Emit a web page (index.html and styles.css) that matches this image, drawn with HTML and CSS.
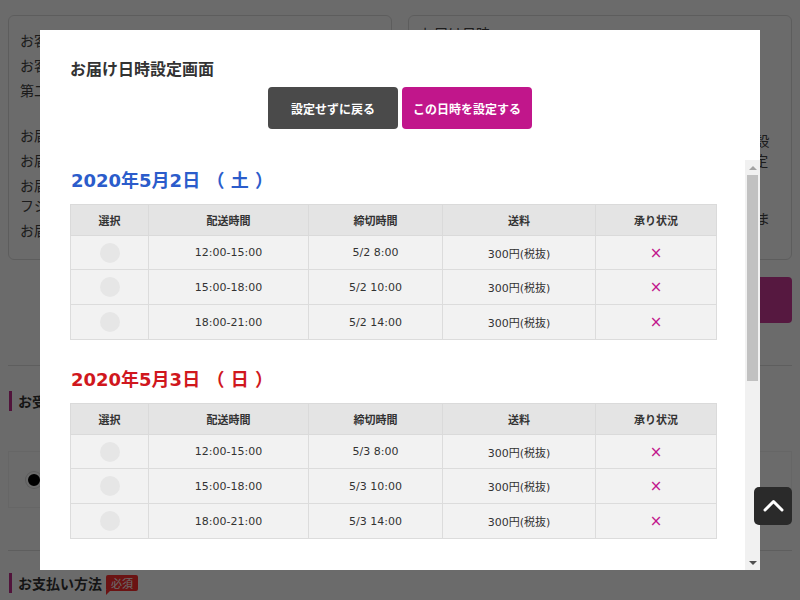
FILE: index.html
```html
<!DOCTYPE html>
<html lang="ja">
<head>
<meta charset="utf-8">
<title>お届け日時設定画面</title>
<link rel="stylesheet" href="styles.css">
</head>
<body>
<div class="page">
  <div class="cards">
    <section class="card card-info">
      <p class="row"><span class="lbl">お客さま名</span><span class="sep">:</span>ステファン モノ</p>
      <p class="row"><span class="lbl">お客さま電話番号</span><span class="sep">:</span>080-5446-5170</p>
      <p class="row"><span class="lbl">第二電話番号</span><span class="sep">:</span></p>
      <p class="row row-gap"><span class="lbl">お届け先</span><span class="sep">:</span>自宅</p>
      <p class="row"><span class="lbl">お届け先郵便番号</span><span class="sep">:</span>562-0001</p>
      <p class="row"><span class="lbl">お届け先住所</span><span class="sep">:</span>大阪府箕面市箕面１丁目７－３４ フジハイツ　一号</p>
      <p class="row"><span class="lbl">お届け先電話番号</span><span class="sep">:</span>080-5446-5170</p>
    </section>
    <section class="card card-when">
      <p class="when-label">お届け日時</p>
      <p class="when-big">お届け日時を選択してください。</p>
      <p class="when-note">時間を過ぎると、ご希望日時での設定が解除され、再設定が必要になります。再設定の際にご希望の日時を設定できない場合がございますのでご注意ください。</p>
      <p class="when-note">この時間帯はご在宅いただけますようお願い申し上げます。</p>
    </section>
  </div>
  <div class="page-actions">
    <div class="pa-col"><button class="pbtn">お届け先を変更する</button></div>
    <div class="pa-col"><button class="pbtn">お届け日時を変更する</button></div>
  </div>
  <section class="sec sec-receive">
    <h2 class="sec-title">お受け取り方法</h2>
    <div class="option"><span class="radio-on"></span><span>通常配送</span></div>
  </section>
  <section class="sec sec-pay">
    <h2 class="sec-title">お支払い方法<span class="req">必須</span></h2>
  </section>
</div>

<div class="overlay"></div>

<div class="modal">
  <div class="modal-head">
    <h1 class="modal-title">お届け日時設定画面</h1>
    <div class="modal-actions">
      <button class="mbtn mbtn-back">設定せずに戻る</button>
      <button class="mbtn mbtn-set">この日時を設定する</button>
    </div>
  </div>
  <div class="modal-body">
    <div class="scroll">
      <div class="day">
        <h2 class="day-title day-sat">2020年5月2日 （ 土 ）</h2>
        <table class="slots">
          <colgroup><col class="c1"><col class="c2"><col class="c3"><col class="c4"><col class="c5"></colgroup>
          <thead><tr><th>選択</th><th>配送時間</th><th>締切時間</th><th>送料</th><th>承り状況</th></tr></thead>
          <tbody>
            <tr><td><span class="radio"></span></td><td>12:00-15:00</td><td>5/2 8:00</td><td>300円(税抜)</td><td><span class="ng">×</span></td></tr>
            <tr><td><span class="radio"></span></td><td>15:00-18:00</td><td>5/2 10:00</td><td>300円(税抜)</td><td><span class="ng">×</span></td></tr>
            <tr><td><span class="radio"></span></td><td>18:00-21:00</td><td>5/2 14:00</td><td>300円(税抜)</td><td><span class="ng">×</span></td></tr>
          </tbody>
        </table>
      </div>
      <div class="day">
        <h2 class="day-title day-hol">2020年5月3日 （ 日 ）</h2>
        <table class="slots">
          <colgroup><col class="c1"><col class="c2"><col class="c3"><col class="c4"><col class="c5"></colgroup>
          <thead><tr><th>選択</th><th>配送時間</th><th>締切時間</th><th>送料</th><th>承り状況</th></tr></thead>
          <tbody>
            <tr><td><span class="radio"></span></td><td>12:00-15:00</td><td>5/3 8:00</td><td>300円(税抜)</td><td><span class="ng">×</span></td></tr>
            <tr><td><span class="radio"></span></td><td>15:00-18:00</td><td>5/3 10:00</td><td>300円(税抜)</td><td><span class="ng">×</span></td></tr>
            <tr><td><span class="radio"></span></td><td>18:00-21:00</td><td>5/3 14:00</td><td>300円(税抜)</td><td><span class="ng">×</span></td></tr>
          </tbody>
        </table>
      </div>
      <div class="day day-later">
        <h2 class="day-title day-hol">2020年5月4日 （ 月 ）</h2>
        <table class="slots">
          <colgroup><col class="c1"><col class="c2"><col class="c3"><col class="c4"><col class="c5"></colgroup>
          <thead><tr><th>選択</th><th>配送時間</th><th>締切時間</th><th>送料</th><th>承り状況</th></tr></thead>
          <tbody>
            <tr><td><span class="radio"></span></td><td>12:00-15:00</td><td>5/4 8:00</td><td>300円(税抜)</td><td><span class="ng">×</span></td></tr>
            <tr><td><span class="radio"></span></td><td>15:00-18:00</td><td>5/4 10:00</td><td>300円(税抜)</td><td><span class="ng">×</span></td></tr>
            <tr><td><span class="radio"></span></td><td>18:00-21:00</td><td>5/4 14:00</td><td>300円(税抜)</td><td><span class="ng">×</span></td></tr>
          </tbody>
        </table>
      </div>
    </div>
    <div class="rail" aria-hidden="true">
      <span class="rail-btn rail-up"><span class="tri tri-up"></span></span>
      <span class="rail-track"><span class="rail-thumb"></span></span>
      <span class="rail-btn rail-down"><span class="tri tri-down"></span></span>
    </div>
  </div>
</div>

<button class="to-top" aria-label="ページの先頭へ">
  <svg width="38" height="38" viewBox="0 0 38 38"><polyline points="11,23 19.5,14.5 28,23" fill="none" stroke="#fff" stroke-width="3" stroke-linecap="round" stroke-linejoin="round"/></svg>
</button>
</body>
</html>
```

FILE: styles.css
```css
* { box-sizing: border-box; }

html, body {
  margin: 0;
  height: 100%;
  overflow: hidden;
}

body {
  font-family: "DejaVu Sans", "Noto Sans CJK JP", sans-serif;
  color: #444;
  background: #fff;
}

p, h1, h2 { margin: 0; }

button { font-family: inherit; border: 0; cursor: pointer; }

/* ---------- background page ---------- */
.page {
  padding: 15px 8px 0;
}

.cards {
  display: grid;
  grid-template-columns: 1fr 1fr;
  gap: 16px;
}

.card {
  border: 1px solid #dedede;
  border-radius: 6px;
  height: 245px;
  font-size: 14px;
}

.card-info {
  padding: 14px 11px 0;
}

.row {
  line-height: 20px;
  margin-bottom: 5px;
  font-family: "Noto Sans CJK JP", "DejaVu Sans", sans-serif;
}

.row-gap { margin-top: 25px; }

.lbl {
  display: inline-block;
  width: 120px;
}

.sep {
  display: inline-block;
  width: 20px;
  padding-left: 1px;
}

.card-when {
  padding: 7px 11px 0;
  font-family: "Noto Sans CJK JP", sans-serif;
}

.when-label { line-height: 20px; }

.when-big {
  font-size: 23px;
  line-height: 32px;
  margin-top: 29px;
  color: #555;
}

.when-note {
  line-height: 20px;
  margin-top: 26px;
}

.when-note + .when-note { margin-top: 18px; }

.page-actions {
  display: grid;
  grid-template-columns: 1fr 1fr;
  gap: 16px;
  margin-top: 17px;
}

.pa-col { display: flex; justify-content: flex-end; }

.pbtn {
  height: 46px;
  padding: 0 31px;
  border-radius: 4px;
  background: #cd3a98;
  color: #fff;
  font-size: 14px;
  font-weight: bold;
  font-family: "Noto Sans CJK JP", sans-serif;
}

.sec {
  border-top: 1px solid #e0e0e0;
}

.sec-receive { margin-top: 42px; padding-top: 25px; }
.sec-pay { margin-top: 42px; padding-top: 22px; }

.sec-title {
  font-family: "Noto Sans CJK JP", sans-serif;
  font-size: 14px;
  line-height: 20px;
  font-weight: bold;
  color: #333;
  margin-left: 1px;
  padding-left: 6px;
  border-left: 3px solid #c02f8e;
  display: flex;
  align-items: center;
}

.option {
  margin-top: 40px;
  height: 57px;
  border: 1px solid #f2f2f2;
  display: flex;
  align-items: center;
  gap: 14px;
  padding-left: 17px;
  font-family: "Noto Sans CJK JP", sans-serif;
  font-size: 14px;
}

.radio-on {
  width: 16px;
  height: 16px;
  border-radius: 50%;
  background: #000;
  border: 2px solid #fff;
  box-shadow: 0 0 0 1px #ddd;
}

.req {
  position: relative;
  margin-left: 4px;
  padding: 0 5px;
  height: 16px;
  line-height: 16px;
  font-size: 11px;
  font-weight: normal;
  color: #fff;
  background: #ff2f2f;
  border-radius: 2px;
}

.req::after {
  content: "";
  position: absolute;
  left: 0;
  bottom: -4px;
  border-top: 5px solid #ff2f2f;
  border-right: 5px solid transparent;
}

/* ---------- overlay + modal ---------- */
.overlay {
  position: fixed;
  inset: 0;
  background: rgba(0, 0, 0, 0.58);
  z-index: 1;
}

.modal {
  position: fixed;
  left: 40px;
  top: 30px;
  width: 720px;
  height: 540px;
  background: #fff;
  z-index: 2;
  display: flex;
  flex-direction: column;
}

.modal-head {
  padding: 27px 30px 31px;
}

.modal-title {
  font-family: "Noto Sans CJK JP", sans-serif;
  font-size: 16px;
  line-height: 22px;
  font-weight: bold;
  color: #333;
}

.modal-actions {
  display: flex;
  justify-content: center;
  gap: 4px;
  margin-top: 8px;
}

.mbtn {
  width: 130px;
  height: 42px;
  border-radius: 4px;
  color: #fff;
  font-family: "Noto Sans CJK JP", sans-serif;
  font-size: 12px;
  font-weight: bold;
}

.mbtn-back { background: #4a4a4a; }
.mbtn-set { background: #c1168b; }

.modal-body {
  flex: 1;
  min-height: 0;
  display: flex;
}

.scroll {
  flex: 1;
  min-width: 0;
  overflow-y: auto;
  scrollbar-width: none;
  padding: 8px 29px 0 30px;
}

/* drawn scrollbar */
.rail {
  width: 15px;
  flex: none;
  background: #f1f1f1;
  display: flex;
  flex-direction: column;
}

.rail-btn {
  height: 15px;
  flex: none;
  display: flex;
  align-items: center;
  justify-content: center;
}

.rail-track {
  flex: 1;
  padding: 0 2px;
}

.rail-thumb {
  display: block;
  height: 206px;
  background: #c1c1c1;
}

.tri {
  width: 0;
  height: 0;
  border-left: 4px solid transparent;
  border-right: 4px solid transparent;
}

.tri-up { border-bottom: 4px solid #a3a3a3; }
.tri-down { border-top: 4px solid #505050; }

.day + .day { margin-top: 27px; }
.day + .day-later { margin-top: 40px; }

.day-title {
  font-size: 18px;
  line-height: 26px;
  font-weight: bold;
  margin-bottom: 10px;
  padding-left: 1px;
}

.day-sat { color: #2b5ccb; }
.day-hol { color: #d0171d; }

.slots {
  width: 100%;
  border-collapse: collapse;
  table-layout: fixed;
  font-size: 11px;
  color: #333;
}

.c1 { width: 78px; }
.c2 { width: 160px; }
.c3 { width: 134px; }
.c4 { width: 153px; }
.c5 { width: 121px; }

.slots th,
.slots td {
  border: 1px solid #dcdcdc;
  text-align: center;
  padding: 0;
}

.slots th {
  height: 31px;
  background: #e4e4e4;
  font-weight: bold;
  font-family: "Noto Sans CJK JP", sans-serif;
  border-color: #dadada;
}

.slots td {
  height: 35px;
  background: #f2f2f2;
}

.slots tbody tr:first-child td { height: 34px; }

.radio {
  display: inline-block;
  width: 20px;
  height: 20px;
  border-radius: 50%;
  background: #e6e6e6;
  vertical-align: middle;
}

.ng {
  color: #c1168b;
  font-size: 15px;
}

/* ---------- back to top ---------- */
.to-top {
  position: fixed;
  left: 754px;
  top: 487px;
  width: 38px;
  height: 38px;
  padding: 0;
  border-radius: 5px;
  background: #2a2a2a;
  z-index: 3;
  display: flex;
  align-items: center;
  justify-content: center;
}
```
